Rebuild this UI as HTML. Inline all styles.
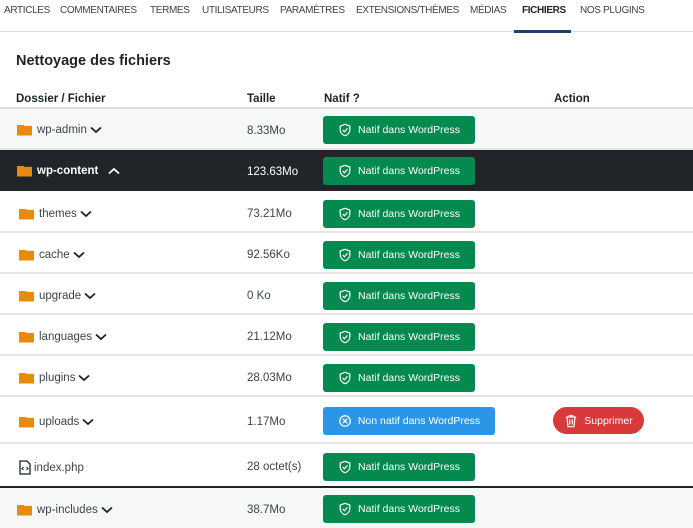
<!DOCTYPE html><html><head><meta charset="utf-8"><style>
*{margin:0;padding:0;box-sizing:border-box}
body{width:693px;height:526px;overflow:hidden;background:#fff;font-family:"Liberation Sans",sans-serif;color:#3c434a;font-size:11px;position:relative}
.nav{position:absolute;top:0;left:0;width:693px;height:32px;border-bottom:1px solid #ddd}
.nav span{position:absolute;top:5px;font-size:10px;letter-spacing:-0.35px;color:#3c434a;white-space:nowrap}
.nav .act{font-weight:bold;color:#1d2327}
.ul{position:absolute;left:514px;top:30px;width:57px;height:3px;background:#1d3f6e}
h1{position:absolute;left:16px;top:53px;font-size:14.5px;font-weight:bold;color:#1d2327}
.th{position:absolute;top:93px;font-weight:bold;font-size:11.5px;color:#1d2327}
.hl{position:absolute;top:107px;left:0;width:693px;height:2px;background:#ddd}
.row{position:absolute;left:0;width:693px;border-bottom:2px solid #e6e6e6}
.row .nm{position:absolute;left:17px;display:flex;align-items:center;gap:3px;font-size:11.5px;margin-top:2px}
.fold{width:15px;height:11px;background:#e88a0b;display:inline-block;margin-right:2px;clip-path:polygon(0 0,40% 0,50% 12%,100% 12%,100% 100%,0 100%)}
.sz{position:absolute;left:247px;font-size:11.5px;margin-top:2px}
.btn{position:absolute;left:323px;width:152px;height:28px;background:#04894f;color:#fff;border-radius:3px;display:flex;align-items:center;justify-content:center;gap:6px;font-size:10.5px;margin-top:1px}
.blue{background:#2b96e8;width:172px}
.del{position:absolute;left:553px;width:91px;height:27px;background:#d9393b;color:#fff;border-radius:14px;display:flex;align-items:center;justify-content:center;gap:6px;font-size:10.5px}
.dark{background:#212529;color:#fff}
.dark .nm,.dark .sz{color:#fff;font-weight:bold}
.dark .sz{font-weight:normal}
</style></head><body>
<div class="nav">
<span style="left:4px">ARTICLES</span><span style="left:60px">COMMENTAIRES</span><span style="left:150px">TERMES</span><span style="left:202px">UTILISATEURS</span><span style="left:280px">PARAMÈTRES</span><span style="left:356px">EXTENSIONS/THÈMES</span><span style="left:470px">MÉDIAS</span><span class="act" style="left:522px">FICHIERS</span><span style="left:580px">NOS PLUGINS</span>
</div><div class="ul"></div>
<h1>Nettoyage des fichiers</h1>
<div class="th" style="left:16px">Dossier / Fichier</div><div class="th" style="left:247px">Taille</div><div class="th" style="left:324px">Natif ?</div><div class="th" style="left:554px">Action</div>
<div class="hl"></div>
<svg width="0" height="0" style="position:absolute"><defs>
<symbol id="sh" viewBox="0 0 16 16"><path d="M8 1.5L2.5 3.5v4c0 3.5 2.5 6 5.5 7 3-1 5.5-3.5 5.5-7v-4z" fill="none" stroke="#fff" stroke-width="1.4"/><path d="M5.3 8l2 2 3.5-3.8" fill="none" stroke="#fff" stroke-width="1.4"/></symbol>
</defs></svg>
<div class="row" style="top:109px;height:41px;background:#f6f7f7"><div class="nm" style="top:13px"><i class="fold"></i>wp-admin <svg width="12" height="8"><path d="M1 1.5l5 4.5 5-4.5" stroke="#1d2327" stroke-width="1.8" fill="none"/></svg></div><div class="sz" style="top:14px">8.33Mo</div><div class="btn" style="top:6px"><svg width="14" height="14"><use href="#sh"/></svg>Natif dans WordPress</div></div>
<div class="row dark" style="top:150px;height:41px;border:0"><div class="nm" style="top:13px"><i class="fold"></i>wp-content &nbsp;<svg width="12" height="8"><path d="M1 6.5l5-4.5 5 4.5" stroke="#fff" stroke-width="1.8" fill="none"/></svg></div><div class="sz" style="top:14px">123.63Mo</div><div class="btn" style="top:6px"><svg width="14" height="14"><use href="#sh"/></svg>Natif dans WordPress</div></div>
<div class="row" style="top:191px;height:42px"><div class="nm" style="top:15px;left:19px"><i class="fold"></i>themes <svg width="12" height="8"><path d="M1 1.5l5 4.5 5-4.5" stroke="#1d2327" stroke-width="1.8" fill="none"/></svg></div><div class="sz" style="top:15px">73.21Mo</div><div class="btn" style="top:8px"><svg width="14" height="14"><use href="#sh"/></svg>Natif dans WordPress</div></div>
<div class="row" style="top:233px;height:41px"><div class="nm" style="top:14px;left:19px"><i class="fold"></i>cache <svg width="12" height="8"><path d="M1 1.5l5 4.5 5-4.5" stroke="#1d2327" stroke-width="1.8" fill="none"/></svg></div><div class="sz" style="top:14px">92.56Ko</div><div class="btn" style="top:7px"><svg width="14" height="14"><use href="#sh"/></svg>Natif dans WordPress</div></div>
<div class="row" style="top:274px;height:41px"><div class="nm" style="top:14px;left:19px"><i class="fold"></i>upgrade <svg width="12" height="8"><path d="M1 1.5l5 4.5 5-4.5" stroke="#1d2327" stroke-width="1.8" fill="none"/></svg></div><div class="sz" style="top:14px">0 Ko</div><div class="btn" style="top:7px"><svg width="14" height="14"><use href="#sh"/></svg>Natif dans WordPress</div></div>
<div class="row" style="top:315px;height:41px"><div class="nm" style="top:14px;left:19px"><i class="fold"></i>languages <svg width="12" height="8"><path d="M1 1.5l5 4.5 5-4.5" stroke="#1d2327" stroke-width="1.8" fill="none"/></svg></div><div class="sz" style="top:14px">21.12Mo</div><div class="btn" style="top:7px"><svg width="14" height="14"><use href="#sh"/></svg>Natif dans WordPress</div></div>
<div class="row" style="top:356px;height:41px"><div class="nm" style="top:14px;left:19px"><i class="fold"></i>plugins <svg width="12" height="8"><path d="M1 1.5l5 4.5 5-4.5" stroke="#1d2327" stroke-width="1.8" fill="none"/></svg></div><div class="sz" style="top:14px">28.03Mo</div><div class="btn" style="top:7px"><svg width="14" height="14"><use href="#sh"/></svg>Natif dans WordPress</div></div>
<div class="row" style="top:397px;height:47px"><div class="nm" style="top:17px;left:19px"><i class="fold"></i>uploads <svg width="12" height="8"><path d="M1 1.5l5 4.5 5-4.5" stroke="#1d2327" stroke-width="1.8" fill="none"/></svg></div><div class="sz" style="top:17px">1.17Mo</div><div class="btn blue" style="top:9px"><svg width="14" height="14" viewBox="0 0 16 16"><circle cx="8" cy="8" r="6" fill="none" stroke="#fff" stroke-width="1.4"/><path d="M5.5 5.5l5 5M10.5 5.5l-5 5" stroke="#fff" stroke-width="1.4"/></svg>Non natif dans WordPress</div><div class="del" style="top:10px"><svg width="14" height="14" viewBox="0 0 16 16"><path d="M2 3.5h12M6 3.5V2h4v1.5M3.5 3.5l1 11h7l1-11M6.5 6v6M9.5 6v6" stroke="#fff" stroke-width="1.4" fill="none"/></svg>Supprimer</div></div>
<div class="row" style="top:444px;height:44px;border-bottom:2px solid #1d2327"><div class="nm" style="top:14px;left:19px"><svg width="12" height="15" viewBox="0 0 12 15"><path d="M1 1h7l3 3v10H1z" fill="none" stroke="#1d2327" stroke-width="1.3"/><path d="M4.5 7L3 8.5 4.5 10M7.5 7L9 8.5 7.5 10" stroke="#1d2327" fill="none"/></svg> index.php</div><div class="sz" style="top:15px">28 octet(s)</div><div class="btn" style="top:8px"><svg width="14" height="14"><use href="#sh"/></svg>Natif dans WordPress</div></div>
<div class="row" style="top:488px;height:40px;background:#f6f7f7;border:0"><div class="nm" style="top:14px"><i class="fold"></i>wp-includes <svg width="12" height="8"><path d="M1 1.5l5 4.5 5-4.5" stroke="#1d2327" stroke-width="1.8" fill="none"/></svg></div><div class="sz" style="top:14px">38.7Mo</div><div class="btn" style="top:6px"><svg width="14" height="14"><use href="#sh"/></svg>Natif dans WordPress</div></div>
</body></html>
